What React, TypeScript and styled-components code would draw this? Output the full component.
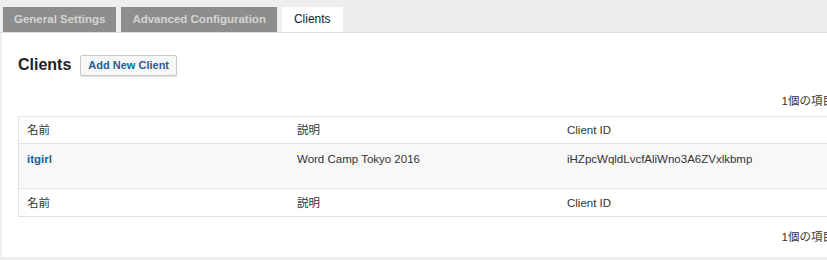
import React from 'react';
import styled, { createGlobalStyle } from 'styled-components';

interface Client {
  name: string;
  description: string;
  clientId: string;
}

const clients: Client[] = [
  { name: 'itgirl', description: 'Word Camp Tokyo 2016', clientId: 'iHZpcWqldLvcfAliWno3A6ZVxlkbmp' },
];

const tabs = ['General Settings', 'Advanced Configuration', 'Clients'];

const GlobalStyle = createGlobalStyle`
  html, body {
    margin: 0;
    padding: 0;
    background: #eeeeee;
    overflow: hidden;
    font-family: "Liberation Sans", Arial, "Noto Sans CJK JP", sans-serif;
    color: #333;
  }
`;

const App: React.FC = () => {
  return (
    <>
      <GlobalStyle />
      <TabBar>
        {tabs.map((tab) => (
          <Tab key={tab} active={tab === 'Clients'}>
            {tab}
          </Tab>
        ))}
      </TabBar>
      <Content>
        <HeadingRow>
          <Heading>Clients</Heading>
          <AddButton>Add New Client</AddButton>
        </HeadingRow>
        <TableNav place="top">1個の項目</TableNav>
        <Table>
          <Row kind="head">
            <Cell>名前</Cell>
            <Cell>説明</Cell>
            <Cell>Client ID</Cell>
          </Row>
          {clients.map((client) => (
            <Row kind="body" key={client.clientId}>
              <Cell>
                <NameLink href="#">{client.name}</NameLink>
              </Cell>
              <Cell>{client.description}</Cell>
              <Cell>{client.clientId}</Cell>
            </Row>
          ))}
          <Row kind="foot">
            <Cell>名前</Cell>
            <Cell>説明</Cell>
            <Cell>Client ID</Cell>
          </Row>
        </Table>
        <TableNav place="bottom">1個の項目</TableNav>
      </Content>
    </>
  );
};

const TabBar = styled.div`
  display: flex;
  align-items: flex-end;
  gap: 5px;
  height: 32px;
  padding-left: 3px;
  border-bottom: 1px solid #dedede;
`;

const Tab = styled.div<{ active?: boolean }>`
  height: 25px;
  line-height: 25px;
  padding: 0 ${(p) => (p.active ? '12px' : '11px')};
  background: ${(p) => (p.active ? '#ffffff' : '#8d8d8d')};
  color: ${(p) => (p.active ? '#222' : '#d4d4d4')};
  font-size: ${(p) => (p.active ? '12px' : '11.5px')};
  font-weight: ${(p) => (p.active ? 'normal' : 'bold')};
  white-space: nowrap;
`;

const Content = styled.div`
  margin-left: 2px;
  width: 848px;
  height: 224px;
  box-sizing: border-box;
  padding: 21px 16px 0 16px;
  background: #ffffff;
`;

const HeadingRow = styled.div`
  display: flex;
  align-items: center;
  gap: 9px;
`;

const Heading = styled.h2`
  margin: 0;
  font-size: 16px;
  font-weight: bold;
  color: #222;
  line-height: 22px;
`;

const AddButton = styled.button`
  height: 21px;
  padding: 0 7px;
  border: 1px solid #c9c9c9;
  border-radius: 2px;
  background: #f7f7f7;
  color: #1f5f95;
  font-family: inherit;
  font-size: 11px;
  font-weight: bold;
  line-height: 19px;
  box-shadow: 0 1px 0 #e4e4e4;
`;

const TableNav = styled.div<{ place: 'top' | 'bottom' }>`
  text-align: right;
  font-size: 11.5px;
  line-height: 16px;
  color: #333;
  padding: ${(p) => (p.place === 'top' ? '17px 0 7px' : '12px 0 0')};
`;

const Table = styled.div`
  border: 1px solid #e1e1e1;
`;

const Row = styled.div<{ kind: 'head' | 'body' | 'foot' }>`
  display: grid;
  grid-template-columns: 270px 270px 1fr;
  align-items: ${(p) => (p.kind === 'body' ? 'start' : 'center')};
  padding-top: ${(p) => (p.kind === 'body' ? '7px' : '0')};
  box-sizing: border-box;
  background: ${(p) => (p.kind === 'body' ? '#f8f8f8' : '#ffffff')};
  border-top: ${(p) => (p.kind === 'head' ? 'none' : '1px solid #e1e1e1')};
  height: ${(p) => (p.kind === 'body' ? '45px' : p.kind === 'foot' ? '28px' : '26px')};
`;

const Cell = styled.div`
  padding-left: 8px;
  font-size: 11.5px;
  line-height: 16px;
  color: #333;
  white-space: nowrap;
`;

const NameLink = styled.a`
  color: #1f5f95;
  font-weight: bold;
  text-decoration: none;
`;

export default App;
